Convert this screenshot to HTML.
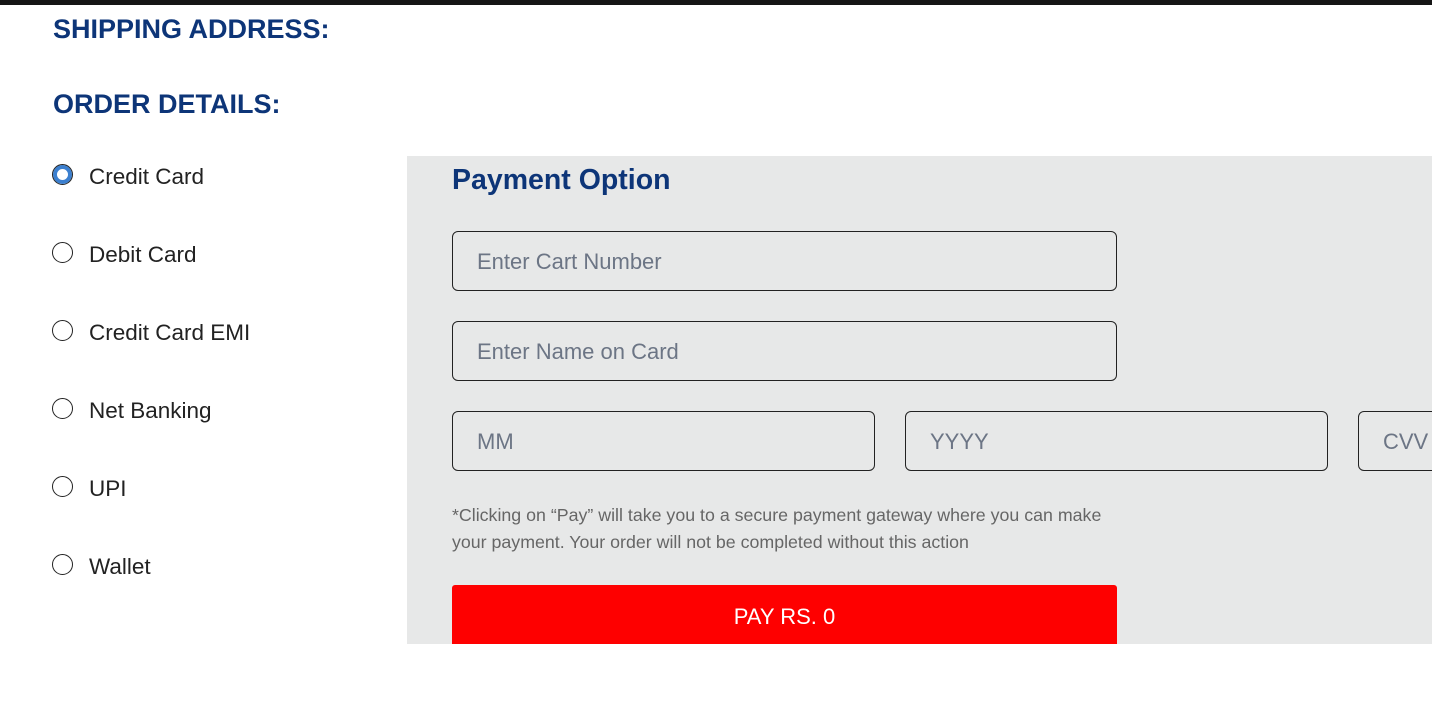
<!DOCTYPE html>
<html><head><style>
body{margin:0;width:1432px;height:714px;background:#fff;position:relative;overflow:hidden;font-family:"Liberation Sans",sans-serif;}
.a{position:absolute;white-space:nowrap}
.h{color:#0d3578;font-weight:bold;font-size:27px}
.r{left:52px;width:21px;height:21px;border:1.5px solid #222;border-radius:50%;box-sizing:border-box;position:absolute}
.l{left:89px;font-size:22.5px;color:#222}
.in{position:absolute;border:1px solid #222;border-radius:6px;box-sizing:border-box;height:60px;font-size:22px;color:#6c7585;padding-left:24px;line-height:60px}
</style></head><body>
<div class="a" style="left:0;top:0;width:1432px;height:5px;background:#151515"></div>
<div class="a h" style="left:53px;top:14px">SHIPPING ADDRESS:</div>
<div class="a h" style="left:53px;top:89px">ORDER DETAILS:</div>
<div class="r" style="top:164px;border:1.5px solid #222;background:#fff;box-shadow:inset 0 0 0 4px #3b7fcf"></div>
<div class="a l" style="top:164px">Credit Card</div>
<div class="r" style="top:242px"></div><div class="a l" style="top:242px">Debit Card</div>
<div class="r" style="top:320px"></div><div class="a l" style="top:320px">Credit Card EMI</div>
<div class="r" style="top:398px"></div><div class="a l" style="top:398px">Net Banking</div>
<div class="r" style="top:476px"></div><div class="a l" style="top:476px">UPI</div>
<div class="r" style="top:554px"></div><div class="a l" style="top:554px">Wallet</div>
<div class="a" style="left:407px;top:156px;width:1025px;height:488px;background:#e7e8e8"></div>
<div class="a" style="left:452px;top:164px;font-size:28.5px;font-weight:bold;color:#0d3578">Payment Option</div>
<div class="in" style="left:452px;top:231px;width:665px">Enter Cart Number</div>
<div class="in" style="left:452px;top:321px;width:665px">Enter Name on Card</div>
<div class="in" style="left:452px;top:411px;width:423px">MM</div>
<div class="in" style="left:905px;top:411px;width:423px">YYYY</div>
<div class="in" style="left:1358px;top:411px;width:200px">CVV</div>
<div class="a" style="left:452px;top:502px;font-size:17.8px;color:#666;line-height:27px">*Clicking on “Pay” will take you to a secure payment gateway where you can make<br>your payment. Your order will not be completed without this action</div>
<div class="a" style="left:452px;top:585px;width:665px;height:59px;background:#fe0000;border-radius:3px 3px 0 0;color:#fff;font-size:22px;text-align:center;line-height:64px">PAY RS. 0</div>
</body></html>
